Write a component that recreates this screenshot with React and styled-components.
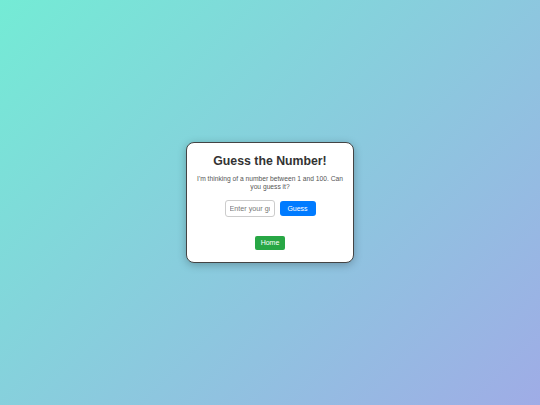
import React from "react";
import styled, { createGlobalStyle } from "styled-components";

const Global = createGlobalStyle`
  html, body { margin: 0; padding: 0; height: 100%; }
  body { font-family: "Liberation Sans", Arial, sans-serif; }
  #root { height: 100%; }
`;

const Page = styled.div`
  width: 540px;
  height: 405px;
  display: flex;
  align-items: center;
  justify-content: center;
  background: linear-gradient(135deg, #74ebd5 0%, #9face6 100%);
`;

const Card = styled.div`
  box-sizing: border-box;
  width: 168px;
  height: 121px;
  background: #fff;
  border: 1.5px solid #444;
  border-radius: 8px;
  box-shadow: 0 2px 8px rgba(0, 0, 0, 0.25);
  padding: 10.5px 9px 11.5px;
  text-align: center;
  display: flex;
  flex-direction: column;
  align-items: center;
`;

const Title = styled.h1`
  margin: 0;
  font-size: 12.3px;
  line-height: 14px;
  font-weight: bold;
  color: #333;
`;

const Text = styled.p`
  margin: 7.5px 0 0;
  font-size: 6.7px;
  line-height: 8px;
  color: #555;
`;

const Row = styled.div`
  display: flex;
  gap: 5px;
  align-items: center;
  margin-top: 8.5px;
`;

const Input = styled.input`
  box-sizing: border-box;
  width: 50px;
  height: 17px;
  border: 1px solid #ccc;
  border-radius: 3px;
  padding: 0 4px;
  font-family: "Liberation Sans", Arial, sans-serif;
  font-size: 7.2px;
  outline: none;
  -moz-appearance: textfield;
  &::placeholder { color: #777; }
  &::-webkit-inner-spin-button,
  &::-webkit-outer-spin-button {
    -webkit-appearance: none;
    margin: 0;
  }
`;

const Button = styled.button`
  box-sizing: border-box;
  border: none;
  color: #fff;
  font-family: "Liberation Sans", Arial, sans-serif;
  font-size: 7px;
  cursor: pointer;
  background: ${(p) => (p.$variant === "home" ? "#28a745" : "#007bff")};
  width: ${(p) => (p.$variant === "home" ? "30px" : "36px")};
  height: ${(p) => (p.$variant === "home" ? "14px" : "15px")};
  border-radius: ${(p) => (p.$variant === "home" ? "2px" : "3px")};
  padding: 0;
  margin-top: ${(p) => (p.$variant === "home" ? "19px" : "0")};
`;

export default function App() {
  return (
    <>
      <Global />
      <Page>
        <Card>
          <Title>Guess the Number!</Title>
          <Text>I'm thinking of a number between 1 and 100. Can you guess it?</Text>
          <Row>
            <Input type="number" placeholder="Enter your guess" />
            <Button>Guess</Button>
          </Row>
          <Button $variant="home">Home</Button>
        </Card>
      </Page>
    </>
  );
}
